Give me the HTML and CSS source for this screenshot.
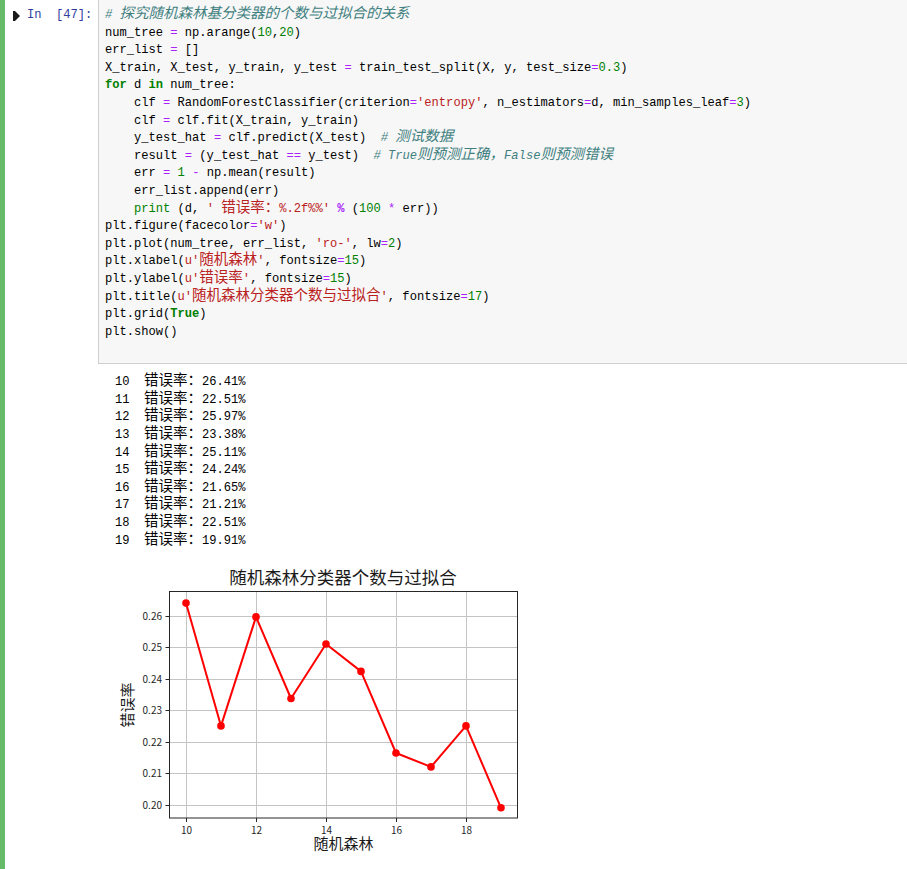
FILE: index.html
```html
<!DOCTYPE html>
<html lang="zh">
<head>
<meta charset="utf-8">
<title>Notebook cell</title>
<link rel="stylesheet" href="styles.css">
</head>
<body>
<div class="cell">
  <div class="input">
    <div class="prompt">
      <svg class="run-icon" width="7" height="10" viewBox="0 0 7 10"><rect x="0" y="0" width="2" height="10" fill="#1a1a1a"/><polygon points="2,0 7,5 2,10" fill="#1a1a1a"/></svg>
      <span>In&nbsp;&nbsp;[47]:</span>
    </div>
    <div class="code">
<div class="line"><span class="cm"># <span class="zh">探究随机森林基分类器的个数与过拟合的关系</span></span></div>
<div class="line">num_tree <span class="op">=</span> np.arange(<span class="num">10</span>,<span class="num">20</span>)</div>
<div class="line">err_list <span class="op">=</span> []</div>
<div class="line">X_train, X_test, y_train, y_test <span class="op">=</span> train_test_split(X, y, test_size<span class="op">=</span><span class="num">0.3</span>)</div>
<div class="line"><span class="kw">for</span> d <span class="kw">in</span> num_tree:</div>
<div class="line">    clf <span class="op">=</span> RandomForestClassifier(criterion<span class="op">=</span><span class="str">'entropy'</span>, n_estimators<span class="op">=</span>d, min_samples_leaf<span class="op">=</span><span class="num">3</span>)</div>
<div class="line">    clf <span class="op">=</span> clf.fit(X_train, y_train)</div>
<div class="line">    y_test_hat <span class="op">=</span> clf.predict(X_test)  <span class="cm"># <span class="zh">测试数据</span></span></div>
<div class="line">    result <span class="op">=</span> (y_test_hat <span class="op">==</span> y_test)  <span class="cm"># True<span class="zh">则预测正确，</span>False<span class="zh">则预测错误</span></span></div>
<div class="line">    err <span class="op">=</span> <span class="num">1</span> <span class="op">-</span> np.mean(result)</div>
<div class="line">    err_list.append(err)</div>
<div class="line">    <span class="bi">print</span> (d, <span class="str">' <span class="zh">错误率：</span>%.2f%%'</span> <span class="opb">%</span> (<span class="num">100</span> <span class="op">*</span> err))</div>
<div class="line">plt.figure(facecolor<span class="op">=</span><span class="str">'w'</span>)</div>
<div class="line">plt.plot(num_tree, err_list, <span class="str">'ro-'</span>, lw<span class="op">=</span><span class="num">2</span>)</div>
<div class="line">plt.xlabel(<span class="str">u'<span class="zh">随机森林</span>'</span>, fontsize<span class="op">=</span><span class="num">15</span>)</div>
<div class="line">plt.ylabel(<span class="str">u'<span class="zh">错误率</span>'</span>, fontsize<span class="op">=</span><span class="num">15</span>)</div>
<div class="line">plt.title(<span class="str">u'<span class="zh">随机森林分类器个数与过拟合</span>'</span>, fontsize<span class="op">=</span><span class="num">17</span>)</div>
<div class="line">plt.grid(<span class="kw">True</span>)</div>
<div class="line">plt.show()</div>
    </div>
  </div>
  <div class="output">
    <div class="out-prompt"></div>
    <div class="out-area">
      <div class="stream">
        <div class="line">10  <span class="zh">错误率：</span>26.41%</div>
        <div class="line">11  <span class="zh">错误率：</span>22.51%</div>
        <div class="line">12  <span class="zh">错误率：</span>25.97%</div>
        <div class="line">13  <span class="zh">错误率：</span>23.38%</div>
        <div class="line">14  <span class="zh">错误率：</span>25.11%</div>
        <div class="line">15  <span class="zh">错误率：</span>24.24%</div>
        <div class="line">16  <span class="zh">错误率：</span>21.65%</div>
        <div class="line">17  <span class="zh">错误率：</span>21.21%</div>
        <div class="line">18  <span class="zh">错误率：</span>22.51%</div>
        <div class="line">19  <span class="zh">错误率：</span>19.91%</div>
      </div>
      <svg class="chart" width="430" height="300" viewBox="0 0 430 300">
        <text class="title" x="243" y="24" text-anchor="middle">随机森林分类器个数与过拟合</text>
        <g class="grid">
          <line x1="86.5" y1="31.5" x2="86.5" y2="258"/>
          <line x1="156.5" y1="31.5" x2="156.5" y2="258"/>
          <line x1="226.5" y1="31.5" x2="226.5" y2="258"/>
          <line x1="296.5" y1="31.5" x2="296.5" y2="258"/>
          <line x1="366.5" y1="31.5" x2="366.5" y2="258"/>
          <line x1="69.5" y1="245.5" x2="418" y2="245.5"/>
          <line x1="69.5" y1="213.5" x2="418" y2="213.5"/>
          <line x1="69.5" y1="182.5" x2="418" y2="182.5"/>
          <line x1="69.5" y1="150.5" x2="418" y2="150.5"/>
          <line x1="69.5" y1="119.5" x2="418" y2="119.5"/>
          <line x1="69.5" y1="87.5" x2="418" y2="87.5"/>
          <line x1="69.5" y1="56.5" x2="418" y2="56.5"/>
        </g>
        <g class="ticks">
          <line x1="65.5" y1="245.5" x2="69.5" y2="245.5"/>
          <line x1="65.5" y1="213.5" x2="69.5" y2="213.5"/>
          <line x1="65.5" y1="182.5" x2="69.5" y2="182.5"/>
          <line x1="65.5" y1="150.5" x2="69.5" y2="150.5"/>
          <line x1="65.5" y1="119.5" x2="69.5" y2="119.5"/>
          <line x1="65.5" y1="87.5" x2="69.5" y2="87.5"/>
          <line x1="65.5" y1="56.5" x2="69.5" y2="56.5"/>
          <line x1="86.5" y1="258" x2="86.5" y2="262"/>
          <line x1="156.5" y1="258" x2="156.5" y2="262"/>
          <line x1="226.5" y1="258" x2="226.5" y2="262"/>
          <line x1="296.5" y1="258" x2="296.5" y2="262"/>
          <line x1="366.5" y1="258" x2="366.5" y2="262"/>
        </g>
        <rect class="frame" x="69.5" y="31.5" width="348" height="226.5"/>
        <g class="tick-label" text-anchor="end">
          <text x="62" y="249">0.20</text>
          <text x="62" y="217">0.21</text>
          <text x="62" y="186">0.22</text>
          <text x="62" y="154">0.23</text>
          <text x="62" y="123">0.24</text>
          <text x="62" y="91">0.25</text>
          <text x="62" y="60">0.26</text>
        </g>
        <g class="tick-label" text-anchor="middle">
          <text x="86.5" y="274">10</text>
          <text x="156.5" y="274">12</text>
          <text x="226.5" y="274">14</text>
          <text x="296.5" y="274">16</text>
          <text x="366.5" y="274">18</text>
        </g>
        <text class="axis-label" x="243.5" y="289" text-anchor="middle">随机森林</text>
        <text class="axis-label" x="0" y="0" text-anchor="middle" transform="translate(33 145) rotate(-90)">错误率</text>
        <polyline class="series" points="86,43.1 121,165.9 156,56.9 191,138.5 226,84 261,111.4 296,193 331,206.9 366,165.9 401,247.8"/>
        <g class="markers">
          <circle cx="86" cy="43.1" r="3.8"/>
          <circle cx="121" cy="165.9" r="3.8"/>
          <circle cx="156" cy="56.9" r="3.8"/>
          <circle cx="191" cy="138.5" r="3.8"/>
          <circle cx="226" cy="84" r="3.8"/>
          <circle cx="261" cy="111.4" r="3.8"/>
          <circle cx="296" cy="193" r="3.8"/>
          <circle cx="331" cy="206.9" r="3.8"/>
          <circle cx="366" cy="165.9" r="3.8"/>
          <circle cx="401" cy="247.8" r="3.8"/>
        </g>
      </svg>
    </div>
  </div>
</div>
</body>
</html>
```

FILE: styles.css
```css
html, body {
  margin: 0;
  padding: 0;
  background: #ffffff;
}

.cell {
  border-left: 5px solid #66bb6a;
  margin-top: -1px;
  min-height: 872px;
  box-sizing: border-box;
  overflow: hidden;
}

.input {
  display: flex;
}

.prompt {
  width: 93px;
  flex: none;
  box-sizing: border-box;
  display: flex;
  align-items: flex-start;
  padding: 8px 0 0 8px;
  font: 12.1px/17.6px "Liberation Mono", monospace;
  color: #303f9f;
  white-space: nowrap;
}

.run-icon {
  flex: none;
  margin: 4px 7px 0 0;
}

.code {
  flex: 1;
  background: #f7f7f7;
  border: 1px solid #cfcfcf;
  border-right: none;
  padding: 7px 0 22px 6px;
  font-family: "Liberation Mono", monospace;
  font-size: 12.1px;
  color: #000;
  min-width: 0;
}

.line {
  height: 17.6px;
  line-height: 17.6px;
  white-space: pre;
  overflow: visible;
}

.zh {
  font-family: "Noto Sans CJK SC", sans-serif;
  font-size: 14.5px;
  line-height: 0;
}

.cm {
  color: #408080;
  font-style: italic;
}

.kw {
  color: #008000;
  font-weight: bold;
}

.bi {
  color: #008000;
}

.op {
  color: #aa22ff;
}

.opb {
  color: #aa22ff;
  font-weight: bold;
}

.num {
  color: #008000;
}

.str {
  color: #ba2121;
}

.output {
  display: flex;
}

.out-prompt {
  width: 93px;
  flex: none;
}

.out-area {
  flex: 1;
  padding-top: 10px;
}

.stream {
  padding-left: 17px;
  font-family: "Liberation Mono", monospace;
  font-size: 12.1px;
  color: #000;
}

.chart {
  display: block;
  margin: 10px 0 0 2px;
}

.chart .title {
  font-family: "Noto Sans CJK SC", sans-serif;
  font-size: 17.5px;
  fill: #1a1a1a;
}

.chart .grid line {
  stroke: #c4c4c4;
  stroke-width: 1;
}

.chart .ticks line {
  stroke: #262626;
  stroke-width: 1;
}

.chart .frame {
  fill: none;
  stroke: #262626;
  stroke-width: 1;
}

.chart .tick-label {
  font-family: "Noto Sans CJK SC", sans-serif;
  font-size: 10px;
  fill: #262626;
}

.chart .axis-label {
  font-family: "Noto Sans CJK SC", sans-serif;
  font-size: 15px;
  fill: #1a1a1a;
}

.chart .series {
  fill: none;
  stroke: #ff0000;
  stroke-width: 2;
  stroke-linejoin: round;
}

.chart .markers circle {
  fill: #ff0000;
}
```
